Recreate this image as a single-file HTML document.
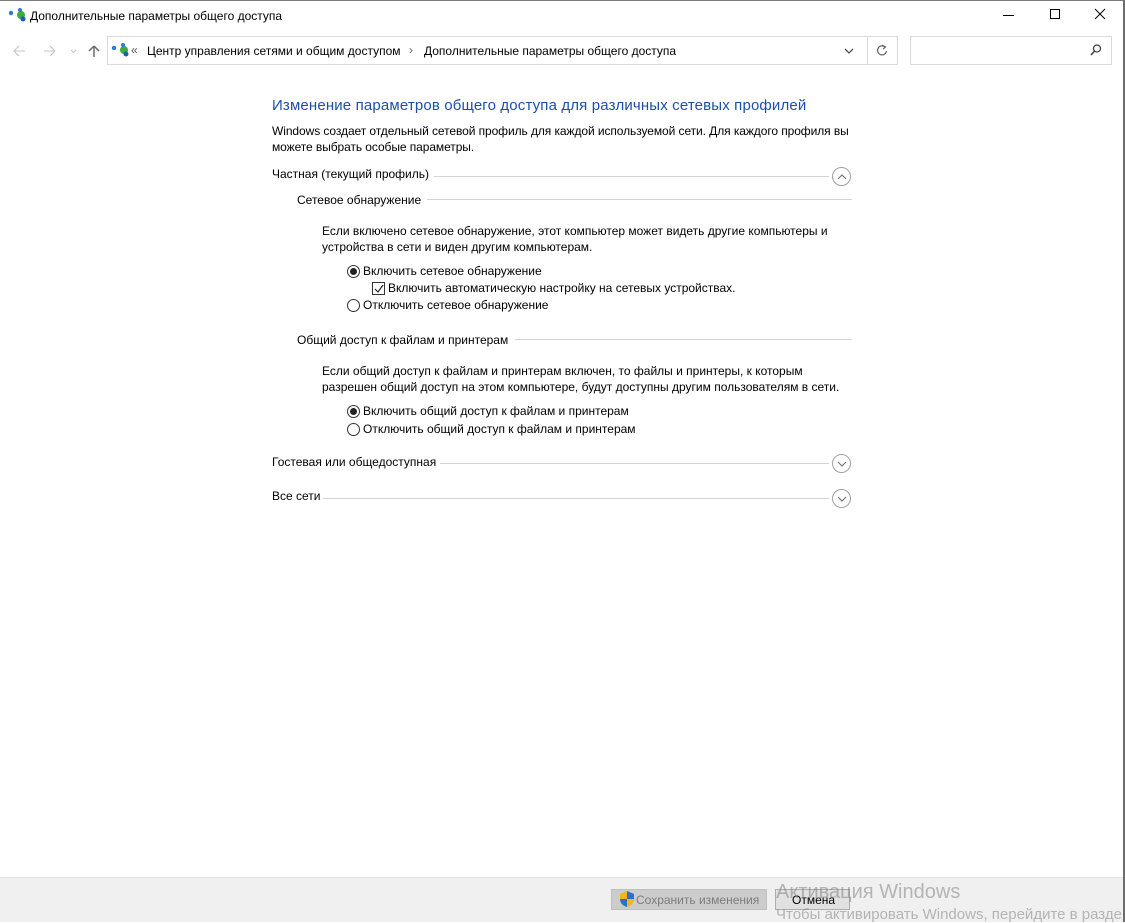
<!DOCTYPE html>
<html><head><meta charset="utf-8"><style>
*{margin:0;padding:0;box-sizing:border-box}
body{width:1125px;height:922px;background:#fff;font-family:"Liberation Sans",sans-serif;font-size:12px;color:#000;position:relative;overflow:hidden;letter-spacing:0}
.a{position:absolute;white-space:nowrap}
.ln{position:absolute;height:1px;background:#d5d5d5}
.circ{position:absolute;width:19px;height:19px;border:1px solid #a0a0a0;border-radius:50%}
.rad{position:absolute;width:13px;height:13px;border:1px solid #333;border-radius:50%;background:#fff}
.rad.on::after{content:"";position:absolute;left:2px;top:2px;width:7px;height:7px;border-radius:50%;background:#222}
.chk{position:absolute;width:13px;height:13px;border:1px solid #333;background:#fff}
</style></head><body>
<div style="position:absolute;left:0;top:0;width:1125px;height:1px;background:#7a7a7a"></div>
<div style="position:absolute;right:0;top:0;width:2px;height:922px;background:#6d6d6d"></div>
<svg class="a" style="left:8px;top:7px" width="20" height="16"><circle cx="3" cy="6" r="2.2" fill="#2a7bd1"/><circle cx="13" cy="8" r="4" fill="#3cae3c"/><circle cx="12" cy="3" r="2" fill="#2a7bd1"/><circle cx="15" cy="12" r="2.5" fill="#1b5fb5"/></svg>
<div class="a" style="left:30px;top:9px">Дополнительные параметры общего доступа</div>
<div class="a" style="left:1003px;top:15px;width:11px;height:1px;background:#000"></div>
<div class="a" style="left:1050px;top:9px;width:10px;height:10px;border:1px solid #000"></div>
<svg class="a" style="left:1094px;top:8px" width="12" height="12"><path d="M1 1L11 11M11 1L1 11" stroke="#000" stroke-width="1"/></svg>
<svg class="a" style="left:12px;top:44px" width="80" height="14"><path d="M2 7H13M2 7L7 2M2 7L7 12" stroke="#c4c4c4" fill="none"/><path d="M32 7H43M43 7L38 2M43 7L38 12" stroke="#c4c4c4" fill="none"/><path d="M59 6L61.5 8.5L64 6" stroke="#c4c4c4" fill="none"/></svg>
<svg class="a" style="left:87px;top:44px" width="14" height="14"><path d="M7 13V2M7 2L2 7M7 2L12 7" stroke="#6b6b6b" stroke-width="1.5" fill="none"/></svg>
<div class="a" style="left:107px;top:36px;width:791px;height:29px;border:1px solid #d9d9d9"></div>
<div class="a" style="left:867px;top:37px;width:1px;height:27px;background:#d9d9d9"></div>
<svg class="a" style="left:111px;top:42px" width="20" height="16"><circle cx="3" cy="6" r="2.2" fill="#2a7bd1"/><circle cx="13" cy="8" r="4" fill="#3cae3c"/><circle cx="12" cy="3" r="2" fill="#2a7bd1"/><circle cx="15" cy="12" r="2.5" fill="#1b5fb5"/></svg>
<div class="a" style="left:131px;top:43px;color:#555">«</div>
<div class="a" style="left:147px;top:44px">Центр управления сетями и общим доступом</div>
<div class="a" style="left:409px;top:43px;color:#666">›</div>
<div class="a" style="left:424px;top:44px">Дополнительные параметры общего доступа</div>
<svg class="a" style="left:844px;top:47px" width="10" height="8"><path d="M1 2L5 6L9 2" stroke="#555" stroke-width="1.3" fill="none"/></svg>
<svg class="a" style="left:875px;top:43px" width="14" height="14"><path d="M10 4A4.5 4.5 0 1 0 11.5 8" stroke="#666" fill="none" stroke-width="1.2"/><path d="M7 2L10.5 4L8 6" stroke="#666" fill="none" stroke-width="1.2"/></svg>
<div class="a" style="left:910px;top:36px;width:202px;height:29px;border:1px solid #d9d9d9"></div>
<svg class="a" style="left:1089px;top:43px" width="14" height="14"><circle cx="8" cy="5.5" r="3.5" stroke="#444" fill="none" stroke-width="1.3"/><path d="M5.5 8L2 12" stroke="#444" stroke-width="1.6"/></svg>
<div class="a" style="left:272px;top:97px;font-size:15px;color:#1e4fa8;letter-spacing:0.15px">Изменение параметров общего доступа для различных сетевых профилей</div>
<div class="a" style="left:272px;top:123px;line-height:16px;letter-spacing:-0.08px">Windows создает отдельный сетевой профиль для каждой используемой сети. Для каждого профиля вы<br>можете выбрать особые параметры.</div>
<div class="a" style="left:272px;top:167px">Частная (текущий профиль)</div>
<div class="ln" style="left:434px;top:176px;width:395px"></div>
<div class="circ" style="left:832px;top:167px"></div>
<svg class="a" style="left:836px;top:172px" width="12" height="10"><path d="M2 7L6 3L10 7" stroke="#777" fill="none" stroke-width="1.2"/></svg>
<div class="a" style="left:297px;top:193px">Сетевое обнаружение</div>
<div class="ln" style="left:427px;top:199px;width:425px"></div>
<div class="a" style="left:322px;top:223px;line-height:16px">Если включено сетевое обнаружение, этот компьютер может видеть другие компьютеры и<br>устройства в сети и виден другим компьютерам.</div>
<div class="rad on" style="left:347px;top:265px"></div>
<div class="a" style="left:363px;top:264px">Включить сетевое обнаружение</div>
<div class="chk" style="left:372px;top:282px"></div>
<svg class="a" style="left:373px;top:283px" width="12" height="12"><path d="M2 6L5 9L10 2" stroke="#222" fill="none" stroke-width="1.2"/></svg>
<div class="a" style="left:388px;top:281px">Включить автоматическую настройку на сетевых устройствах.</div>
<div class="rad" style="left:347px;top:299px"></div>
<div class="a" style="left:363px;top:298px">Отключить сетевое обнаружение</div>
<div class="a" style="left:297px;top:333px">Общий доступ к файлам и принтерам</div>
<div class="ln" style="left:515px;top:339px;width:337px"></div>
<div class="a" style="left:322px;top:363px;line-height:16px">Если общий доступ к файлам и принтерам включен, то файлы и принтеры, к которым<br>разрешен общий доступ на этом компьютере, будут доступны другим пользователям в сети.</div>
<div class="rad on" style="left:347px;top:405px"></div>
<div class="a" style="left:363px;top:404px">Включить общий доступ к файлам и принтерам</div>
<div class="rad" style="left:347px;top:423px"></div>
<div class="a" style="left:363px;top:422px">Отключить общий доступ к файлам и принтерам</div>
<div class="a" style="left:272px;top:455px">Гостевая или общедоступная</div>
<div class="ln" style="left:440px;top:463px;width:389px"></div>
<div class="circ" style="left:832px;top:454px"></div>
<svg class="a" style="left:836px;top:459px" width="12" height="10"><path d="M2 3L6 7L10 3" stroke="#777" fill="none" stroke-width="1.2"/></svg>
<div class="a" style="left:272px;top:489px">Все сети</div>
<div class="ln" style="left:323px;top:498px;width:506px"></div>
<div class="circ" style="left:832px;top:489px"></div>
<svg class="a" style="left:836px;top:494px" width="12" height="10"><path d="M2 3L6 7L10 3" stroke="#777" fill="none" stroke-width="1.2"/></svg>
<div class="a" style="left:0;top:877px;width:1123px;height:45px;background:#f0f0f0;border-top:1px solid #dfdfdf"></div>
<div class="a" style="left:611px;top:889px;width:156px;height:21px;background:#cccccc;border:1px solid #bfbfbf"></div>
<svg class="a" style="left:619px;top:890px" width="16" height="18"><path d="M8 1L15 4V9C15 13 12 16 8 17C4 16 1 13 1 9V4Z" fill="#f2b51c"/><path d="M8 1L15 4V9H8ZM8 9V17C4 16 1 13 1 9Z" fill="#2b6fd1"/></svg>
<div class="a" style="left:636px;top:893px;color:#7c7c7c">Сохранить изменения</div>
<div class="a" style="left:775px;top:889px;width:75px;height:21px;background:#e1e1e1;border:1px solid #adadad"></div>
<div class="a" style="left:792px;top:893px">Отмена</div>
<div class="a" style="left:776px;top:881px;font-size:20px;color:rgba(120,120,120,0.5);letter-spacing:0">Активация Windows</div>
<div class="a" style="left:776px;top:906px;font-size:15px;color:rgba(120,120,120,0.5);letter-spacing:0">Чтобы активировать Windows, перейдите в разде</div>
</body></html>
